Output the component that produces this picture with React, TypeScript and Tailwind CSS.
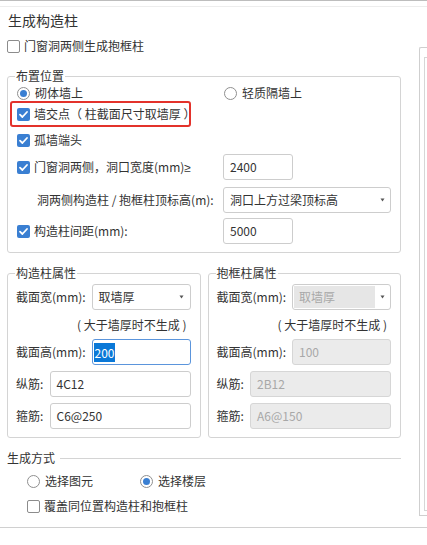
import React from 'react';

const FONT = "font-['Noto_Sans_CJK_SC','Noto_Sans',sans-serif]";

function CheckBox({ checked }: { checked?: boolean }) {
  if (checked) {
    return (
      <span className="w-[13px] h-[13px] shrink-0 rounded-[2px] bg-[#3a7fd2] flex items-center justify-center">
        <svg width="11" height="11" viewBox="0 0 11 11">
          <path d="M2 5.6 L4.4 8 L9 3" stroke="white" strokeWidth="1.8" fill="none" strokeLinecap="round" strokeLinejoin="round" />
        </svg>
      </span>
    );
  }
  return <span className="w-[13px] h-[13px] shrink-0 rounded-[2px] border border-[#8c8c8c] bg-white" />;
}

function Radio({ checked }: { checked?: boolean }) {
  return (
    <span className="w-[13px] h-[13px] shrink-0 rounded-full border border-[#8f8f8f] bg-white flex items-center justify-center">
      {checked && <span className="w-[7px] h-[7px] rounded-full bg-[#3a7fd2]" />}
    </span>
  );
}

function Arrow() {
  return (
    <svg width="7" height="4" viewBox="0 0 7 4" className="shrink-0">
      <path d="M1.5 0.5 L5.5 0.5 L3.5 3.5 Z" fill="#555" />
    </svg>
  );
}

function Input({ value, w, disabled }: { value: string; w: string; disabled?: boolean }) {
  return (
    <div
      className={`${w} h-[26px] shrink-0 rounded-[3px] border flex items-center pl-[6px] ${
        disabled ? 'bg-[#ebebeb] border-[#d6d6d6] text-[#a8a8a8]' : 'bg-white border-[#cdcdcd] text-[#333]'
      }`}
    >
      {value}
    </div>
  );
}

function Select({ value, w, disabled }: { value: string; w: string; disabled?: boolean }) {
  return (
    <div className={`${w} h-[26px] shrink-0 rounded-[3px] border border-[#cdcdcd] bg-white flex items-center p-[1px]`}>
      <div
        className={`flex-1 h-full flex items-center pl-[5px] ${
          disabled ? 'bg-[#e6e6e6] text-[#a8a8a8]' : 'text-[#333]'
        }`}
      >
        {value}
      </div>
      <div className="w-[14px] flex items-center justify-center">
        <Arrow />
      </div>
    </div>
  );
}

function Group({ title, className, children }: { title: string; className?: string; children: React.ReactNode }) {
  return (
    <div className={`relative border border-[#d4d4d4] rounded-[3px] ${className ?? ''}`}>
      <span className="absolute left-[7px] -top-[10px] bg-white px-[1px] leading-[18px]">{title}</span>
      {children}
    </div>
  );
}

function PropGroup({ title, disabled, vals }: { title: string; disabled?: boolean; vals: [string, string, string, string] }) {
  return (
    <Group title={title} className="flex-1 pt-[10px] pb-[8px] pl-[8px] pr-[9px]">
      <div className="h-[26px] flex items-center justify-between">
        <span>截面宽(mm):</span>
        <Select value={vals[0]} w="w-[99px]" disabled={disabled} />
      </div>
      <div className="h-[29px] flex items-center justify-end pr-[4px]">( 大于墙厚时不生成 )</div>
      <div className="h-[26px] flex items-center justify-between">
        <span>截面高(mm):</span>
        {disabled ? (
          <Input value={vals[1]} w="w-[99px]" disabled />
        ) : (
          <div className="w-[99px] h-[26px] rounded-[3px] border border-[#5b95dc] bg-white flex items-center pl-[1px]">
            <span className="bg-[#0a78d7] text-white leading-[19px] pl-[1px] pr-[1px]">{vals[1]}</span>
          </div>
        )}
      </div>
      <div className="mt-[6px] h-[26px] flex items-center justify-between">
        <span>纵筋:</span>
        <Input value={vals[2]} w="w-[141px]" disabled={disabled} />
      </div>
      <div className="mt-[6px] h-[26px] flex items-center justify-between">
        <span>箍筋:</span>
        <Input value={vals[3]} w="w-[141px]" disabled={disabled} />
      </div>
    </Group>
  );
}

export default function App() {
  return (
    <div className={`w-[427px] h-[545px] bg-white overflow-hidden text-[12px] text-[#333] ${FONT}`}>
      <div className="h-px bg-[#bdbdbd]" />
      <div className="h-[5px]" />
      <div className="h-px bg-[#ededed]" />

      <div className="flex">
        {/* main column */}
        <div className="w-[419px] shrink-0 pl-[7px]">
          <div className="h-[26px] flex items-center pl-[1px] text-[14px]">生成构造柱</div>
          <div className="h-[26px] flex items-center gap-[4px]">
            <CheckBox />
            <span>门窗洞两侧生成抱框柱</span>
          </div>

          <Group title="布置位置" className="mt-[17px] w-[394px] pt-[6px] pb-[8px]">
            <div className="h-[20px] flex items-center">
              <div className="w-[216px] flex items-center gap-[5px] pl-[9px]">
                <Radio checked />
                <span>砌体墙上</span>
              </div>
              <div className="flex items-center gap-[5px]">
                <Radio />
                <span>轻质隔墙上</span>
              </div>
            </div>
            <div className="-mt-[2px] ml-[2px] w-[181px] h-[26px] border-2 border-[#e3322b] rounded-[3px] flex items-center gap-[4px] pl-[5px]">
              <CheckBox checked />
              <span className="whitespace-nowrap">墙交点（ 柱截面尺寸取墙厚 ）</span>
            </div>
            <div className="h-[26px] flex items-center gap-[4px] pl-[9px]">
              <CheckBox checked />
              <span>孤墙端头</span>
            </div>
            <div className="h-[28px] flex items-center">
              <div className="w-[215px] flex items-center gap-[4px] pl-[9px]">
                <CheckBox checked />
                <span>
                  门窗洞两侧，洞口宽度(mm)<span className="font-['Liberation_Sans',sans-serif]">≥</span>
                </span>
              </div>
              <Input value="2400" w="w-[70px]" />
            </div>
            <div className="mt-[6px] h-[26px] flex items-center">
              <div className="w-[215px] pl-[29px]">洞两侧构造柱 / 抱框柱顶标高(m):</div>
              <Select value="洞口上方过梁顶标高" w="w-[168px]" />
            </div>
            <div className="mt-[5px] h-[26px] flex items-center">
              <div className="w-[215px] flex items-center gap-[4px] pl-[9px]">
                <CheckBox checked />
                <span>构造柱间距(mm):</span>
              </div>
              <Input value="5000" w="w-[70px]" />
            </div>
          </Group>

          <div className="mt-[20px] w-[394px] flex gap-[7px]">
            <PropGroup title="构造柱属性" vals={['取墙厚', '200', '4C12', 'C6@250']} />
            <PropGroup title="抱框柱属性" disabled vals={['取墙厚', '100', '2B12', 'A6@150']} />
          </div>

          <div className="mt-[10px] w-[394px] h-[20px] flex items-center gap-[5px]">
            <span>生成方式</span>
            <div className="flex-1 h-px bg-[#d4d4d4]" />
          </div>
          <div className="mt-[3px] h-[20px] flex items-center">
            <div className="w-[133px] flex items-center gap-[5px] pl-[20px]">
              <Radio />
              <span>选择图元</span>
            </div>
            <div className="flex items-center gap-[5px]">
              <Radio checked />
              <span>选择楼层</span>
            </div>
          </div>
          <div className="mt-[5px] h-[20px] flex items-center gap-[4px] pl-[20px]">
            <CheckBox />
            <span>覆盖同位置构造柱和抱框柱</span>
          </div>
        </div>

        {/* side panel, cut off by the window edge */}
        <div className="flex-1 mt-[40px] h-[469px] border-l border-t border-b border-[#cfcfcf] rounded-tl-[2px] pl-[4px] pt-[9px]">
          <div className="h-[454px] border-l border-t border-b border-[#d6d6d6]" />
        </div>
      </div>

      <div className="mt-[11px] h-px bg-[#d0d0d0]" />
    </div>
  );
}
